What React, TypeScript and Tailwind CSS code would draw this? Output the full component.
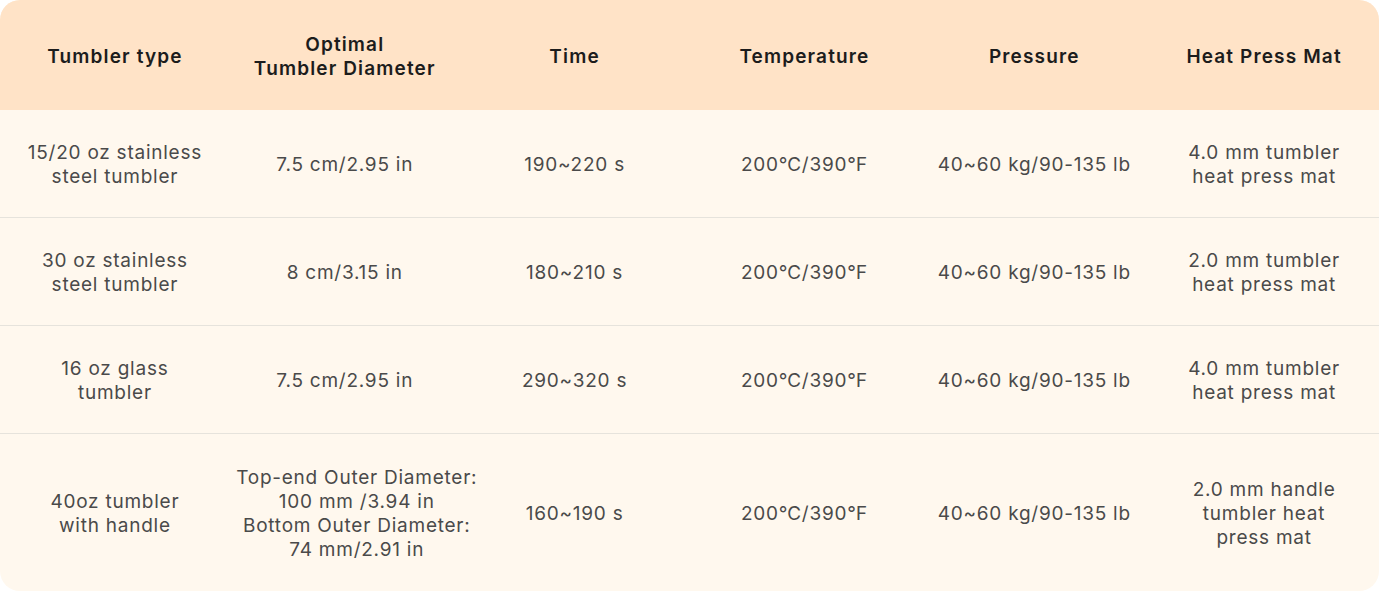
const headers = ["Tumbler type", "Optimal\nTumbler Diameter", "Time", "Temperature", "Pressure", "Heat Press Mat"];

const rows: { cells: string[]; h: string }[] = [
  {
    cells: ["15/20 oz stainless\nsteel tumbler", "7.5 cm/2.95 in", "190~220 s", "200℃/390℉", "40~60 kg/90-135 lb", "4.0 mm tumbler\nheat press mat"],
    h: "h-[108px]",
  },
  {
    cells: ["30 oz stainless\nsteel tumbler", "8 cm/3.15 in", "180~210 s", "200℃/390℉", "40~60 kg/90-135 lb", "2.0 mm tumbler\nheat press mat"],
    h: "h-[108px]",
  },
  {
    cells: ["16 oz glass\ntumbler", "7.5 cm/2.95 in", "290~320 s", "200℃/390℉", "40~60 kg/90-135 lb", "4.0 mm tumbler\nheat press mat"],
    h: "h-[108px]",
  },
  {
    cells: [
      "40oz tumbler\nwith handle",
      "Top-end Outer Diameter:\n100 mm /3.94 in\nBottom Outer Diameter:\n74 mm/2.91 in",
      "160~190 s",
      "200℃/390℉",
      "40~60 kg/90-135 lb",
      "2.0 mm handle\ntumbler heat\npress mat",
    ],
    h: "h-[157px]",
  },
];

export default function App() {
  return (
    <div className="w-[1379px] h-[591px] bg-white font-['Inter','Liberation_Sans',sans-serif]">
      <div className="w-full h-full rounded-[20px] overflow-hidden bg-[#FFF8EE]">
        <div className="grid grid-cols-6 h-[110px] bg-[#FFE3C7]">
          {headers.map((h) => (
            <div
              key={h}
              className="flex items-center justify-center pt-[3px] text-center whitespace-pre text-[19px] leading-[24px] font-semibold tracking-[0.06em] text-[#1c1c1c]"
            >
              {h}
            </div>
          ))}
        </div>
        {rows.map((r, i) => (
          <div
            key={i}
            className={`grid grid-cols-6 ${r.h} ${i < rows.length - 1 ? "border-b border-[#E6E3DC]" : ""}`}
          >
            {r.cells.map((c, j) => (
              <div
                key={j}
                className={`flex items-center justify-center pt-[3px] text-center whitespace-pre text-[19px] leading-[24px] tracking-[0.04em] text-[#4a4a4a] ${
                  i === 3 && j === 1 ? "pl-[24px]" : ""
                }`}
              >
                {c}
              </div>
            ))}
          </div>
        ))}
      </div>
    </div>
  );
}
